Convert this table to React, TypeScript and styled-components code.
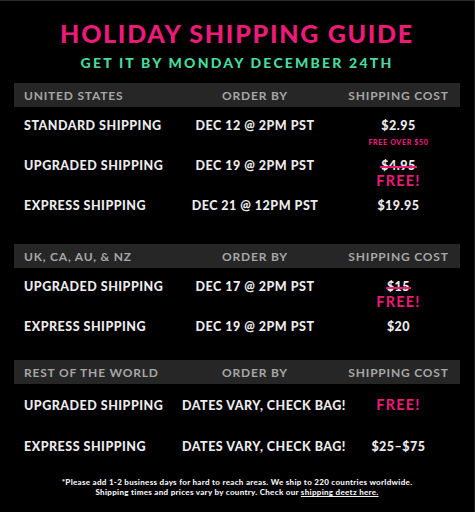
import React from "react";
import styled, { createGlobalStyle } from "styled-components";

const Global = createGlobalStyle`
  html, body { margin: 0; padding: 0; background: #000; }
  * { box-sizing: border-box; }
`;

const PINK = "#ec1b78";
const GREEN = "#46dc9c";
const FONT = `"Lato", "Open Sans", sans-serif`;

const Page = styled.div`
  width: 475px;
  height: 512px;
  background: #000;
  border-top: 1px solid #2c2c2c;
  border-right: 1px solid #1c1c1c;
  font-family: ${FONT};
  color: #ececec;
  display: flex;
  flex-direction: column;
  align-items: stretch;
`;

const Header = styled.header`
  display: flex;
  flex-direction: column;
  align-items: center;
  padding-top: 19px;
  height: 82px;
`;

const Title = styled.h1`
  margin: 0;
  font-size: 25px;
  line-height: 26px;
  font-weight: 900;
  letter-spacing: 1.7px;
  color: ${PINK};
`;

const Subtitle = styled.h2`
  margin: 9px 0 0;
  font-size: 14px;
  line-height: 16px;
  font-weight: 900;
  letter-spacing: 2.2px;
  color: ${GREEN};
`;

const Section = styled.section<{ $gap: number }>`
  margin: ${(p) => p.$gap}px 14px 0;
`;

const Grid = styled.div`
  display: grid;
  grid-template-columns: 160px 162px 125px;
`;

const Bar = styled(Grid)`
  background: #262626;
  height: 24px;
  align-items: center;
  color: #a6a6a6;
  font-size: 12px;
  font-weight: 700;
  letter-spacing: 0.8px;
`;

const BarCell = styled.div<{ $align: "left" | "center" }>`
  text-align: ${(p) => p.$align};
  padding-left: ${(p) => (p.$align === "left" ? "10px" : "0")};
  white-space: nowrap;
`;

const Body = styled.div<{ $top: number }>`
  padding-top: ${(p) => p.$top}px;
`;

const Row = styled(Grid)<{ $h: number }>`
  height: ${(p) => p.$h}px;
  padding-top: 11px;
  font-size: 12.5px;
  line-height: 16px;
  font-weight: 900;
  letter-spacing: 0.5px;
`;

const Cell = styled.div<{ $align: "left" | "center"; $pad?: number }>`
  text-align: ${(p) => p.$align};
  padding-left: ${(p) => (p.$align === "left" ? 10 : p.$pad ?? 0)}px;
  white-space: nowrap;
`;

const Price = styled.div`
  display: flex;
  flex-direction: column;
  align-items: center;
  white-space: nowrap;
`;

const Struck = styled.span`
  position: relative;
  display: block;
  line-height: 16px;
  &::after {
    content: "";
    position: absolute;
    left: -1px;
    right: -1px;
    top: 8px;
    height: 2px;
    background: ${PINK};
  }
`;

const Free = styled.span`
  color: ${PINK};
  font-size: 14.5px;
  line-height: 14px;
  font-weight: 700;
  letter-spacing: 1.2px;
`;

const Note = styled.span`
  color: ${PINK};
  font-size: 7px;
  line-height: 16px;
  font-weight: 900;
  letter-spacing: 0.7px;
`;

const Footer = styled.footer`
  margin-top: 8px;
  text-align: center;
  font-size: 8px;
  line-height: 10px;
  font-weight: 900;
  color: #f2f2f2;
  letter-spacing: 0.3px;
`;

const Link = styled.a`
  color: inherit;
  text-decoration: underline;
`;

type RowData = {
  name: string;
  date: string;
  pad?: number;
  price?: string;
  struck?: string;
  note?: string;
  free?: boolean;
};

const sections: { region: string; gap: number; top: number; h: number; rows: RowData[] }[] = [
  {
    region: "UNITED STATES",
    gap: 0,
    top: 0,
    h: 40,
    rows: [
      { name: "STANDARD SHIPPING", date: "DEC 12 @ 2PM PST", price: "$2.95", note: "FREE OVER $50" },
      { name: "UPGRADED SHIPPING", date: "DEC 19 @ 2PM PST", struck: "$4.95", free: true },
      { name: "EXPRESS SHIPPING", date: "DEC 21 @ 12PM PST", price: "$19.95" },
    ],
  },
  {
    region: "UK, CA, AU, & NZ",
    gap: 17,
    top: 0,
    h: 40,
    rows: [
      { name: "UPGRADED SHIPPING", date: "DEC 17 @ 2PM PST", struck: "$15", free: true },
      { name: "EXPRESS SHIPPING", date: "DEC 19 @ 2PM PST", price: "$20" },
    ],
  },
  {
    region: "REST OF THE WORLD",
    gap: 12,
    top: 3,
    h: 41,
    rows: [
      { name: "UPGRADED SHIPPING", date: "DATES VARY, CHECK BAG!", pad: 8, free: true },
      { name: "EXPRESS SHIPPING", date: "DATES VARY, CHECK BAG!", pad: 8, price: "$25\u2013$75" },
    ],
  },
];

export default function App() {
  return (
    <>
      <Global />
      <Page>
        <Header>
          <Title>HOLIDAY SHIPPING GUIDE</Title>
          <Subtitle>GET IT BY MONDAY DECEMBER 24TH</Subtitle>
        </Header>
        {sections.map((s) => (
          <Section key={s.region} $gap={s.gap}>
            <Bar>
              <BarCell $align="left">{s.region}</BarCell>
              <BarCell $align="center">ORDER BY</BarCell>
              <BarCell $align="center">SHIPPING COST</BarCell>
            </Bar>
            <Body $top={s.top}>
              {s.rows.map((r) => (
                <Row key={r.name} $h={s.h}>
                  <Cell $align="left">{r.name}</Cell>
                  <Cell $align="center" $pad={r.pad}>{r.date}</Cell>
                  <Price>
                    {r.price && <span>{r.price}</span>}
                    {r.struck && <Struck>{r.struck}</Struck>}
                    {r.note && <Note>{r.note}</Note>}
                    {r.free && <Free>FREE!</Free>}
                  </Price>
                </Row>
              ))}
            </Body>
          </Section>
        ))}
        <Footer>
          *Please add 1-2 business days for hard to reach areas. We ship to 220 countries worldwide.
          <br />
          Shipping times and prices vary by country. Check our <Link>shipping deetz here.</Link>
        </Footer>
      </Page>
    </>
  );
}
